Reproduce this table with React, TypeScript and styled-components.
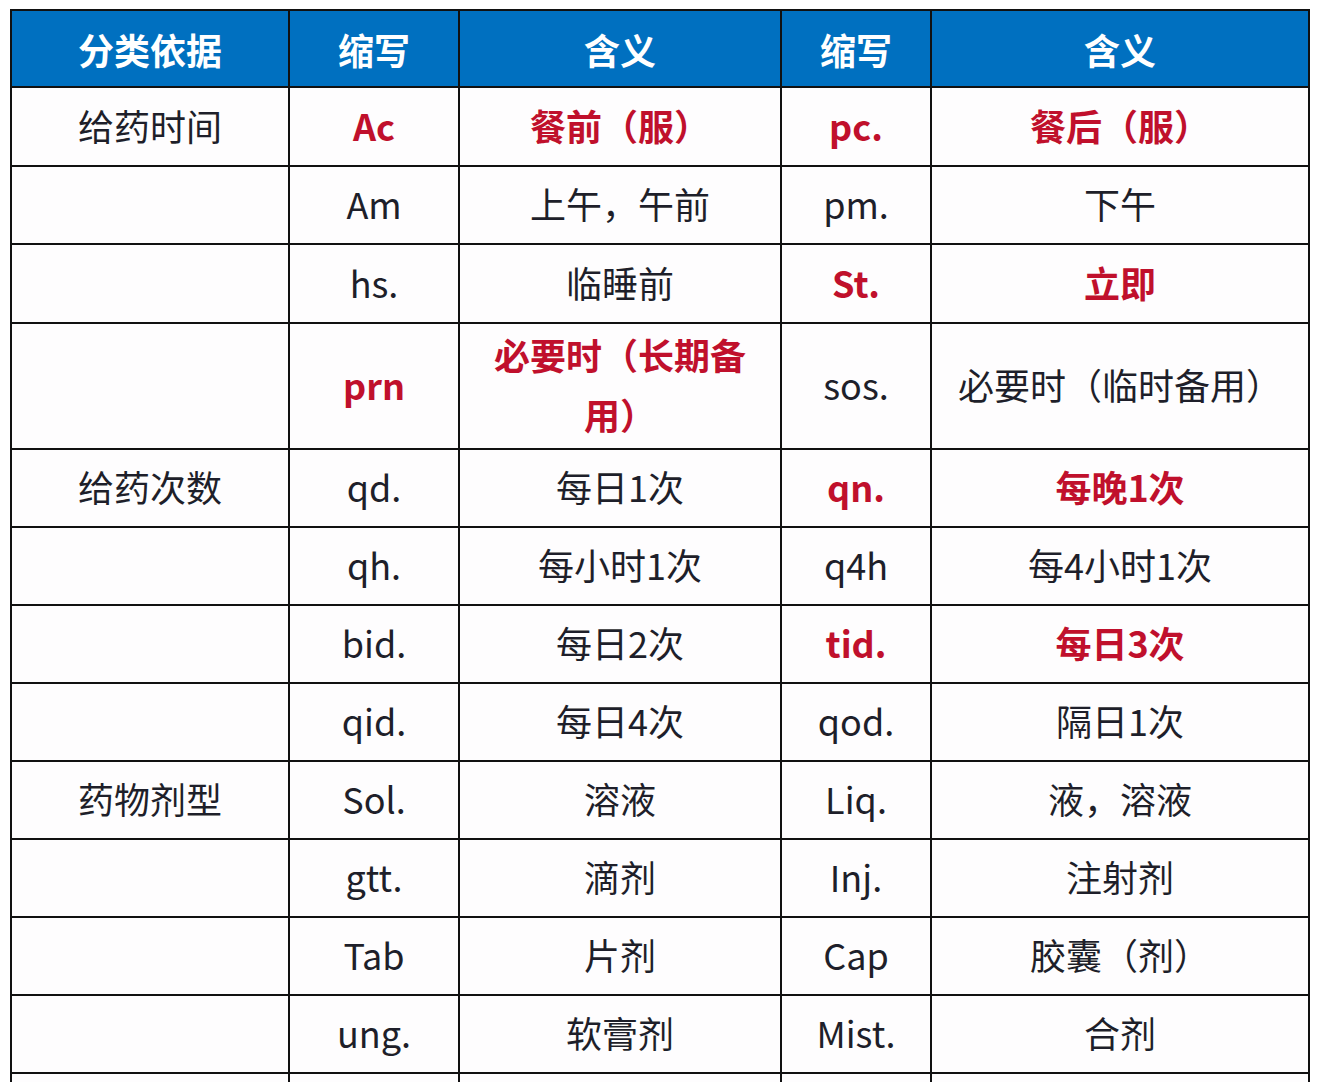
import React from "react";
import styled, { createGlobalStyle } from "styled-components";

const HEADERS = ["分类依据", "缩写", "含义", "缩写", "含义"];
const COL_WIDTHS = [278, 170, 322, 150, 378];

type Row = {
  group?: string;
  abbr: string;
  meaning: string;
  abbr2: string;
  meaning2: string;
  hot1?: boolean;
  hot2?: boolean;
  h?: number;
};

const ROWS: Row[] = [
  { group: "给药时间", abbr: "Ac", meaning: "餐前（服）", abbr2: "pc.", meaning2: "餐后（服）", hot1: true, hot2: true, h: 77 },
  { abbr: "Am", meaning: "上午，午前", abbr2: "pm.", meaning2: "下午" },
  { abbr: "hs.", meaning: "临睡前", abbr2: "St.", meaning2: "立即", hot2: true, h: 77 },
  { abbr: "prn", meaning: "必要时（长期备用）", abbr2: "sos.", meaning2: "必要时（临时备用）", hot1: true, h: 124 },
  { group: "给药次数", abbr: "qd.", meaning: "每日1次", abbr2: "qn.", meaning2: "每晚1次", hot2: true },
  { abbr: "qh.", meaning: "每小时1次", abbr2: "q4h", meaning2: "每4小时1次" },
  { abbr: "bid.", meaning: "每日2次", abbr2: "tid.", meaning2: "每日3次", hot2: true },
  { abbr: "qid.", meaning: "每日4次", abbr2: "qod.", meaning2: "隔日1次" },
  { group: "药物剂型", abbr: "Sol.", meaning: "溶液", abbr2: "Liq.", meaning2: "液，溶液" },
  { abbr: "gtt.", meaning: "滴剂", abbr2: "Inj.", meaning2: "注射剂" },
  { abbr: "Tab", meaning: "片剂", abbr2: "Cap", meaning2: "胶囊（剂）" },
  { abbr: "ung.", meaning: "软膏剂", abbr2: "Mist.", meaning2: "合剂" },
  { abbr: "", meaning: "", abbr2: "", meaning2: "" },
];

const GlobalStyle = createGlobalStyle`
  html, body {
    margin: 0;
    background: #ffffff;
  }
  body {
    font-family: "Noto Sans CJK SC", "Noto Sans", sans-serif;
    color: #1e1f2a;
  }
`;

const Page = styled.div`
  padding: 9px 0 0 10px;
  height: 1082px;
  overflow: hidden;
  box-sizing: border-box;
`;

const Table = styled.table`
  border-collapse: collapse;
  table-layout: fixed;
  width: 1300px;
  border: 2px solid #111;
`;

const HeadCell = styled.th`
  background: #0070c0;
  color: #ffffff;
  font-size: 36px;
  font-weight: 700;
  height: 75px;
  padding: 0;
  border: 2px solid #111;
  text-align: center;
  vertical-align: middle;
  line-height: 1;
`;

// bottom padding lifts the text a few px above the true centre, as in the source
const Cell = styled.td<{ $hot?: boolean; $h?: number }>`
  border: 2px solid #111;
  height: ${({ $h }) => ($h ?? 76) - 4}px;
  padding: 0 20px 4px;
  text-align: center;
  vertical-align: middle;
  font-size: 36px;
  line-height: 60px;
  font-weight: ${({ $hot }) => ($hot ? 700 : 400)};
  color: ${({ $hot }) => ($hot ? "#c0102c" : "#1e1f2a")};
  background: #fefdfe;
`;

export default function App() {
  return (
    <>
      <GlobalStyle />
      <Page>
        <Table>
          <colgroup>
            {COL_WIDTHS.map((w, i) => (
              <col key={i} style={{ width: w }} />
            ))}
          </colgroup>
          <thead>
            <tr>
              {HEADERS.map((h, i) => (
                <HeadCell key={i}>{h}</HeadCell>
              ))}
            </tr>
          </thead>
          <tbody>
            {ROWS.map((r, i) => (
              <tr key={i}>
                <Cell $h={r.h}>{r.group}</Cell>
                <Cell $hot={r.hot1} $h={r.h}>{r.abbr}</Cell>
                <Cell $hot={r.hot1} $h={r.h}>{r.meaning}</Cell>
                <Cell $hot={r.hot2} $h={r.h}>{r.abbr2}</Cell>
                <Cell $hot={r.hot2} $h={r.h}>{r.meaning2}</Cell>
              </tr>
            ))}
          </tbody>
        </Table>
      </Page>
    </>
  );
}
